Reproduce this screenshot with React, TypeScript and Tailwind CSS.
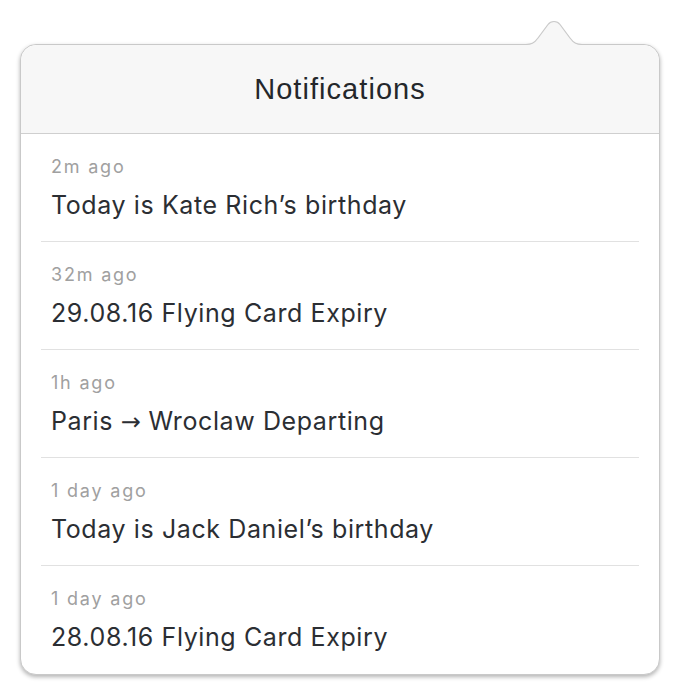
const items = [
  { time: "2m ago", title: "Today is Kate Rich’s birthday" },
  { time: "32m ago", title: "29.08.16 Flying Card Expiry" },
  { time: "1h ago", title: "Paris \u2192 Wroclaw Departing" },
  { time: "1 day ago", title: "Today is Jack Daniel’s birthday" },
  { time: "1 day ago", title: "28.08.16 Flying Card Expiry" },
];

const caretPath =
  "M0 25.5 H4 C9 25.5 12 24.5 16 19 L26 5.5 C29 1.5 35 1.5 38 5.5 L48 19 C52 24.5 55 25.5 60 25.5 H66";

function Caret() {
  return (
    <svg
      className="absolute right-[71px] top-[-26px]"
      width="66"
      height="28"
      viewBox="0 0 66 28"
    >
      <path d={caretPath + " V28 H0 Z"} fill="#f7f7f7" />
      <path d={caretPath} fill="none" stroke="#c9c9c9" strokeWidth="1.2" />
    </svg>
  );
}

// the arrow glyph reads closer to the reference in DejaVu (filled head)
function Title({ text }: { text: string }) {
  const parts = text.split("\u2192");
  if (parts.length < 2) return <>{text}</>;
  return (
    <>
      {parts[0]}
      <span className="font-['DejaVu_Sans',sans-serif] text-[24px] leading-none tracking-normal">
        {"\u2192"}
      </span>
      {parts[1]}
    </>
  );
}

export default function App() {
  return (
    <div className="w-[680px] h-[696px] bg-white pt-[44px] px-5">
      <div className="relative w-[640px] rounded-2xl border border-[#c9c9c9] bg-white shadow-[0_2px_4px_rgba(0,0,0,0.3)]">
        <Caret />
        <div className="flex h-[89px] items-center justify-center rounded-t-2xl border-b border-[#cfcfcf] bg-[#f7f7f7]">
          <span className="pt-[1px] font-['Liberation_Sans',Arial,sans-serif] text-[29px] leading-none tracking-[1.05px] text-[#24272b]">
            Notifications
          </span>
        </div>
        <div className="mx-5">
          {items.map((item, i) => {
            const last = i === items.length - 1;
            return (
              <div
                key={i}
                className={
                  "flex flex-col pl-[10px] pt-[21px] font-['Inter',sans-serif] " +
                  (last ? "pb-[22px]" : "pb-[21px] border-b border-[#e1e1e1]")
                }
              >
                <span className="text-[18px] leading-6 tracking-[1.8px] text-[#a0a0a0]">
                  {item.time}
                </span>
                <span className="mt-[11px] h-[30px] text-[25px] leading-[30px] tracking-[0.6px] text-[#2b2e33]">
                  <Title text={item.title} />
                </span>
              </div>
            );
          })}
        </div>
      </div>
    </div>
  );
}
